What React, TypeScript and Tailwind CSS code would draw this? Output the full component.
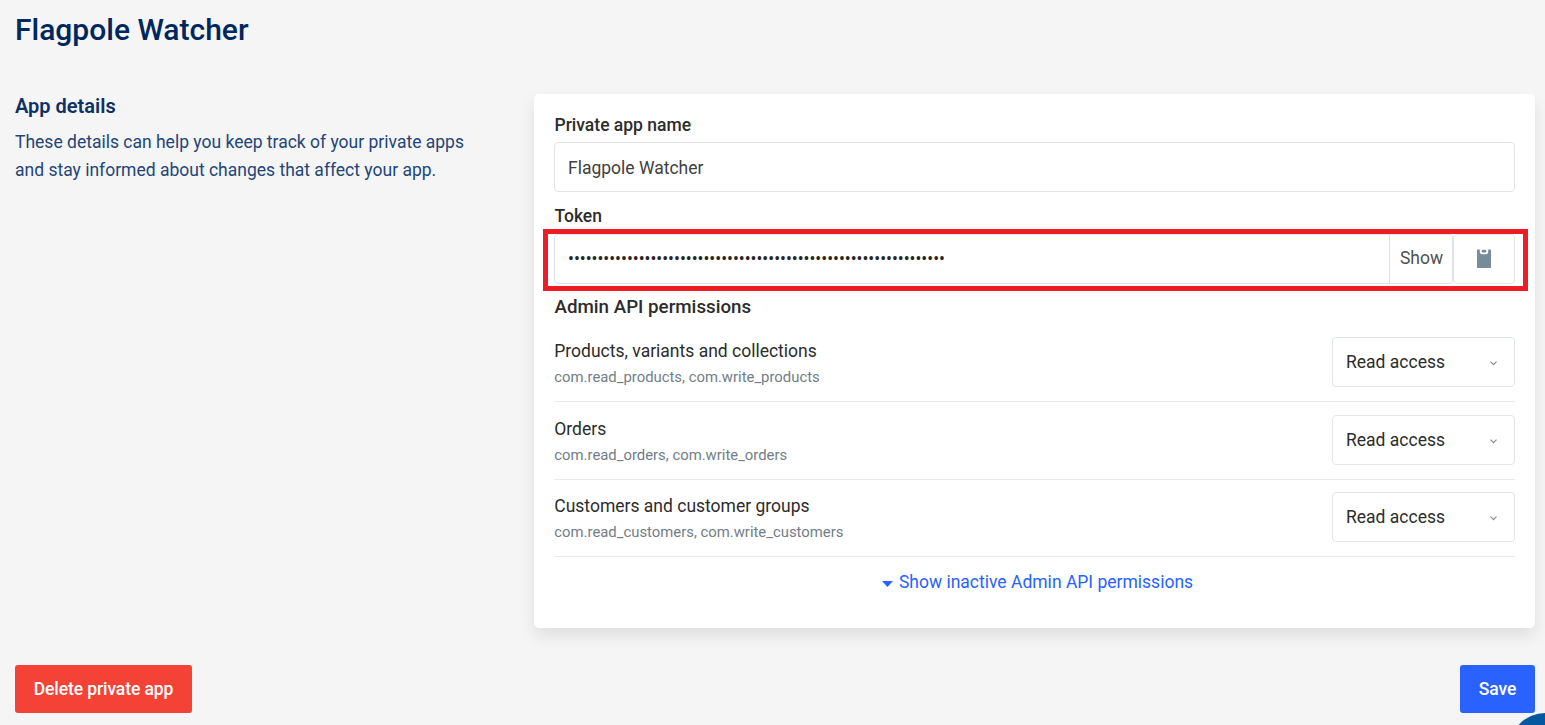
import React from "react";

type Permission = { title: string; scopes: string; layout: string };

const permissions: Permission[] = [
  { title: "Products, variants and collections", scopes: "com.read_products, com.write_products", layout: "h-[65px]" },
  { title: "Orders", scopes: "com.read_orders, com.write_orders", layout: "mt-[13px] h-[65px]" },
  { title: "Customers and customer groups", scopes: "com.read_customers, com.write_customers", layout: "mt-[12px] h-[65px]" },
];

function ClipboardIcon() {
  return (
    <svg className="-mt-px" width="14" height="19" viewBox="0 0 14 19" fill="none">
      <path
        d="M0 1.300Q0 .5 .8 .5H2.800V2.600Q2.800 5.300 5 5.300H9Q11.200 5.300 11.200 2.600V.5H13.200Q14 .5 14 1.300V18.200Q14 19 13.200 19H.8Q0 19 0 18.200Z"
        fill="#778b9a"
      />
      <rect x="4.700" y=".8" width="4.600" height="2.700" rx="1.300" fill="#778b9a" />
    </svg>
  );
}

function AccessSelect() {
  return (
    <button className="flex h-[50px] w-[183px] shrink-0 items-center justify-between rounded-[4px] border border-[#e1e6ea] bg-white pr-[17px] pl-[13px] text-[#2c2c2c]">
      <span>Read access</span>
      <svg className="mt-[3px]" width="7" height="5" viewBox="0 0 7 5" fill="none">
        <path d="M.5 .7L3.500 3.700L6.500 .7" stroke="#8b8b8b" strokeWidth="1.200" />
      </svg>
    </button>
  );
}

function PermissionRow({ title, scopes, layout }: Permission) {
  return (
    <div className={`flex items-start justify-between border-b border-[#eaeaea] ${layout}`}>
      <div className="pl-[0.300px]">
        <div className="leading-[28px] text-[#2c2c2c]">{title}</div>
        <div className="text-[14.860px] leading-[24px] text-[#737d87]">{scopes}</div>
      </div>
      <AccessSelect />
    </div>
  );
}

export default function App() {
  return (
    <div className="relative flex h-[725px] w-full flex-col overflow-hidden bg-[#f5f5f5] pr-[10px] pl-[15px] font-[Roboto,sans-serif] text-[17.500px] leading-[28px] font-normal">
      <h1 className="mt-[10px] h-[40px] text-[30px] leading-[40px] font-medium text-[#00265e]">Flagpole Watcher</h1>

      <main className="mt-[44px] flex h-[534px] shrink-0">
        <section className="w-[519px] shrink-0 text-[#234578]">
          <h2 className="text-[20px] leading-[24px] font-semibold text-[#0f3064]">App details</h2>
          <p className="mt-[10px] w-[470px]">
            These details can help you keep track of your private apps and stay informed about changes that affect your app.
          </p>
        </section>

        <section className="flex flex-1 flex-col rounded-[5px] bg-white px-[20px] pt-[17px] shadow-[0_8px_16px_rgba(0,0,0,0.09)]">
          <label className="h-[31px] pl-[0.500px] font-medium text-[#2c2c2c]">Private app name</label>
          <div className="flex h-[50px] items-center rounded-[4px] border border-[#e1e4e8] px-[13px] pt-px text-[#404040]">Flagpole Watcher</div>
          <label className="mt-[10px] h-[27px] pl-[0.500px] font-medium text-[#2c2c2c]">Token</label>

          <div className="relative mt-[5px] flex h-[50px]">
            <div className="flex flex-1 items-center rounded-l-[4px] border border-[#dbe2e8] px-[13px] text-[#262626]">
              <span className="tracking-[-0.015px]">{"•".repeat(64)}</span>
            </div>
            <button className="-ml-px w-[64px] rounded-r-[3px] border border-[#dbe2e8] pb-[2px] pl-px text-[#515151]">Show</button>
            <button className="flex w-[62px] items-center justify-center rounded-[4px] border border-[#e1e6ea]">
              <ClipboardIcon />
            </button>
            <div className="pointer-events-none absolute -top-[5px] -right-[13px] -left-[11px] h-[62px] border-[5px] border-[#ee1c25]" />
          </div>

          <h3 className="mt-[9px] h-[44px] pl-[0.500px] text-[18.750px] leading-[28px] font-medium text-[#2c2c2c]">Admin API permissions</h3>

          {permissions.map((permission) => (
            <PermissionRow key={permission.title} {...permission} />
          ))}

          <button className="mt-[11px] flex items-center justify-center gap-[6px] pl-[6px] text-[#2962ff]">
            <svg className="mt-[3px]" width="11" height="6" viewBox="0 0 11 6">
              <path d="M0 0H11L5.500 6Z" fill="#2962ff" />
            </svg>
            Show inactive Admin API permissions
          </button>
        </section>
      </main>

      <footer className="mt-[37px] flex justify-between font-medium text-white">
        <button className="h-[48px] w-[177px] rounded-[3px] bg-[#f44336] tracking-[-0.100px]">Delete private app</button>
        <button className="h-[48px] w-[75px] rounded-[3px] bg-[#2962ff] tracking-[-0.080px]">Save</button>
      </footer>
      <div className="absolute top-[713px] left-[1510px] size-[70px] rounded-full bg-[#0557a0]" />
    </div>
  );
}
